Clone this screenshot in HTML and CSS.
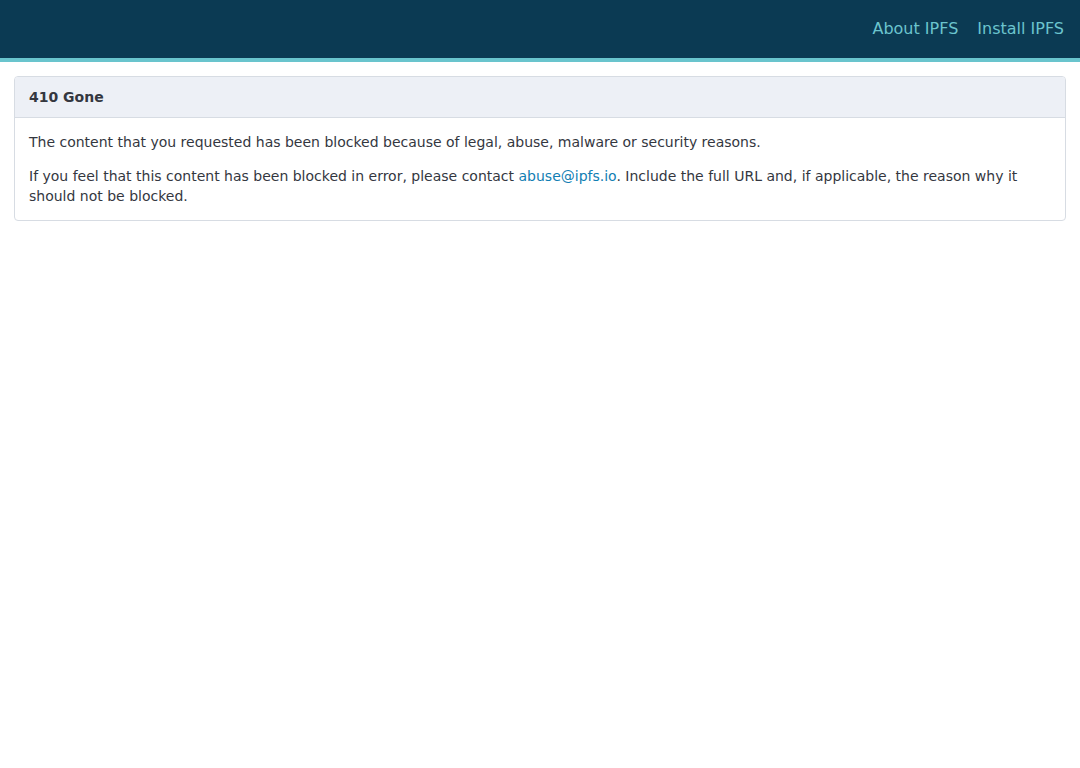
FILE: index.html
```html
<!DOCTYPE html>
<html lang="en">
  <head>
    <meta charset="UTF-8" />
    <title>410 Gone</title>
    <link rel="stylesheet" href="styles.css">
  </head>
  <body>
    <header class="topbar">
      <nav class="topnav">
        <a href="#">About IPFS</a>
        <a href="#">Install IPFS</a>
      </nav>
    </header>

    <main class="page">
      <section class="card">
        <div class="card-header">410 Gone</div>
        <div class="card-body">
          <p>The content that you requested has been blocked because of legal, abuse, malware or security reasons.</p>
          <p>If you feel that this content has been blocked in error, please contact <a href="#">abuse@ipfs.io</a>. Include the full URL and, if applicable, the reason why it should not be blocked.</p>
        </div>
      </section>
    </main>
  </body>
</html>
```

FILE: styles.css
```css
body {
  font-family: "DejaVu Sans", sans-serif;
  font-size: 14px;
  line-height: 20px;
  color: #34373f;
  background-color: #fff;
  margin: 0;
}

.topbar {
  background-color: #0b3a53;
  border-bottom: 4px solid #69c4cd;
  height: 58px;
  display: flex;
  align-items: center;
  justify-content: flex-end;
  padding: 0 16px;
}

.topnav {
  display: flex;
  gap: 19px;
}

.topnav a {
  color: #6bc4ce;
  text-decoration: none;
  font-size: 16px;
}

.page {
  padding: 14px;
}

.card {
  border: 1px solid #d7dce3;
  border-radius: 4px;
  overflow: hidden;
}

.card-header {
  background-color: #edf0f6;
  border-bottom: 1px solid #d7dce3;
  padding: 10px 14px;
  font-weight: bold;
}

.card-body {
  padding: 14px;
}

.card-body p {
  margin: 0 0 14px;
}

.card-body p:last-child {
  margin-bottom: 0;
}

.card-body a {
  color: #117eb3;
  text-decoration: none;
}
```
